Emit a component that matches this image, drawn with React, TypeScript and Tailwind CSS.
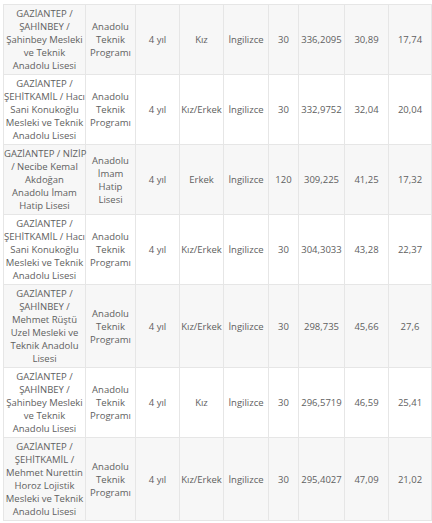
import React from "react";

type Row = {
  school: string[];
  program: string[];
  dur: string;
  gender: string;
  lang: string;
  quota: string;
  score: string;
  p1: string;
  p2: string;
};

const prog = ["Anadolu", "Teknik", "Programı"];
const r1 = ["GAZİANTEP /", "ŞAHİNBEY /", "Şahinbey Mesleki", "ve Teknik", "Anadolu Lisesi"];
const r2 = ["GAZİANTEP /", "ŞEHİTKAMİL / Hacı", "Sani Konukoğlu", "Mesleki ve Teknik", "Anadolu Lisesi"];

const rows: Row[] = [
  { school: r1, program: prog, dur: "4 yıl", gender: "Kız", lang: "İngilizce", quota: "30", score: "336,2095", p1: "30,89", p2: "17,74" },
  { school: r2, program: prog, dur: "4 yıl", gender: "Kız/Erkek", lang: "İngilizce", quota: "30", score: "332,9752", p1: "32,04", p2: "20,04" },
  {
    school: ["GAZİANTEP / NİZİP", "/ Necibe Kemal", "Akdoğan", "Anadolu İmam", "Hatip Lisesi"],
    program: ["Anadolu", "İmam", "Hatip", "Lisesi"],
    dur: "4 yıl", gender: "Erkek", lang: "İngilizce", quota: "120", score: "309,225", p1: "41,25", p2: "17,32",
  },
  { school: r2, program: prog, dur: "4 yıl", gender: "Kız/Erkek", lang: "İngilizce", quota: "30", score: "304,3033", p1: "43,28", p2: "22,37" },
  {
    school: ["GAZİANTEP /", "ŞAHİNBEY /", "Mehmet Rüştü", "Uzel Mesleki ve", "Teknik Anadolu", "Lisesi"],
    program: prog, dur: "4 yıl", gender: "Kız/Erkek", lang: "İngilizce", quota: "30", score: "298,735", p1: "45,66", p2: "27,6",
  },
  { school: r1, program: prog, dur: "4 yıl", gender: "Kız", lang: "İngilizce", quota: "30", score: "296,5719", p1: "46,59", p2: "25,41" },
  {
    school: ["GAZİANTEP /", "ŞEHİTKAMİL /", "Mehmet Nurettin", "Horoz Lojistik", "Mesleki ve Teknik", "Anadolu Lisesi"],
    program: prog, dur: "4 yıl", gender: "Kız/Erkek", lang: "İngilizce", quota: "30", score: "295,4027", p1: "47,09", p2: "21,02",
  },
];

function Lines({ lines }: { lines: string[] }) {
  return (
    <>
      {lines.map((l, i) => (
        <span key={i} className="block whitespace-nowrap">
          {l}
        </span>
      ))}
    </>
  );
}

const td = "border border-[#e6e6e6] px-0 py-[2px] text-center align-middle";

export default function App() {
  return (
    <div className="bg-white pl-[3px] pt-[4px] w-[432px] h-[523px] overflow-hidden">
      <table
        className="table-fixed border-collapse w-[428px] text-[#606060] text-[9.5px] leading-[13px]"
        style={{ fontFamily: '"Open Sans", "Noto Sans", sans-serif' }}
      >
        <colgroup>
          <col className="w-[82px]" />
          <col className="w-[50px]" />
          <col className="w-[44px]" />
          <col className="w-[44px]" />
          <col className="w-[45px]" />
          <col className="w-[30px]" />
          <col className="w-[46px]" />
          <col className="w-[44px]" />
          <col className="w-[43px]" />
        </colgroup>
        <tbody>
          {rows.map((r, i) => (
            <tr key={i} className={i % 2 === 0 ? "bg-[#f7f7f7]" : "bg-white"}>
              <td className={td}>
                <Lines lines={r.school} />
              </td>
              <td className={td}>
                <Lines lines={r.program} />
              </td>
              <td className={td}>{r.dur}</td>
              <td className={td}>{r.gender}</td>
              <td className={td}>{r.lang}</td>
              <td className={td}>{r.quota}</td>
              <td className={td}>{r.score}</td>
              <td className={td}>{r.p1}</td>
              <td className={td}>{r.p2}</td>
            </tr>
          ))}
        </tbody>
      </table>
    </div>
  );
}
